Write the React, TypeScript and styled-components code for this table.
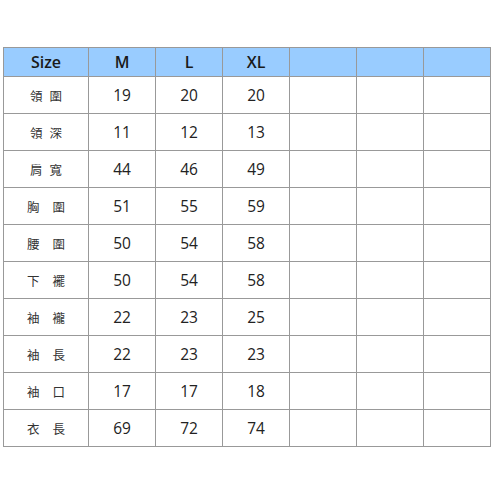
import React from "react";
import styled, { createGlobalStyle } from "styled-components";

const Global = createGlobalStyle`
  html, body { margin: 0; padding: 0; background: #ffffff; }
  body { font-family: "Open Sans", "Noto Sans CJK TC", sans-serif; }
`;

const Page = styled.div`
  padding: 47px 0 0 3px;
`;

const Table = styled.table`
  border-collapse: collapse;
  table-layout: fixed;
  width: 488px;
  color: #222;
`;

const HeadRow = styled.tr`
  height: 29px;
  background: #99ccff;
`;

const Row = styled.tr`
  height: 37px;
`;

const Th = styled.th`
  border: 1px solid #999999;
  padding: 0;
  font-family: "Open Sans", sans-serif;
  font-size: 16px;
  font-weight: 600;
  color: #1a1a1a;
  text-align: center;
`;

const Td = styled.td`
  border: 1px solid #999999;
  padding: 0;
  font-family: "Open Sans", sans-serif;
  font-size: 15.5px;
  text-align: center;
  color: #222;
`;

const Label = styled.span<{ $gap: number }>`
  display: inline-flex;
  gap: ${(p) => p.$gap}px;
  font-family: "Noto Sans CJK TC", sans-serif;
  font-size: 12.5px;
  color: #333;
`;

const headers = ["Size", "M", "L", "XL", "", "", ""];

const rows: { label: [string, string]; wide: boolean; vals: number[] }[] = [
  { label: ["領", "圍"], wide: false, vals: [19, 20, 20] },
  { label: ["領", "深"], wide: false, vals: [11, 12, 13] },
  { label: ["肩", "寬"], wide: false, vals: [44, 46, 49] },
  { label: ["胸", "圍"], wide: true, vals: [51, 55, 59] },
  { label: ["腰", "圍"], wide: true, vals: [50, 54, 58] },
  { label: ["下", "襬"], wide: true, vals: [50, 54, 58] },
  { label: ["袖", "襱"], wide: true, vals: [22, 23, 25] },
  { label: ["袖", "長"], wide: true, vals: [22, 23, 23] },
  { label: ["袖", "口"], wide: true, vals: [17, 17, 18] },
  { label: ["衣", "長"], wide: true, vals: [69, 72, 74] },
];

export default function App() {
  return (
    <>
      <Global />
      <Page>
        <Table>
          <colgroup>
            <col style={{ width: 85 }} />
            {Array.from({ length: 6 }).map((_, i) => (
              <col key={i} style={{ width: 67 }} />
            ))}
          </colgroup>
          <thead>
            <HeadRow>
              {headers.map((h, i) => (
                <Th key={i}>{h}</Th>
              ))}
            </HeadRow>
          </thead>
          <tbody>
            {rows.map((r, i) => (
              <Row key={i}>
                <Td>
                  <Label $gap={r.wide ? 13 : 7}>
                    <span>{r.label[0]}</span>
                    <span>{r.label[1]}</span>
                  </Label>
                </Td>
                {r.vals.map((v, j) => (
                  <Td key={j}>{v}</Td>
                ))}
                <Td />
                <Td />
                <Td />
              </Row>
            ))}
          </tbody>
        </Table>
      </Page>
    </>
  );
}
